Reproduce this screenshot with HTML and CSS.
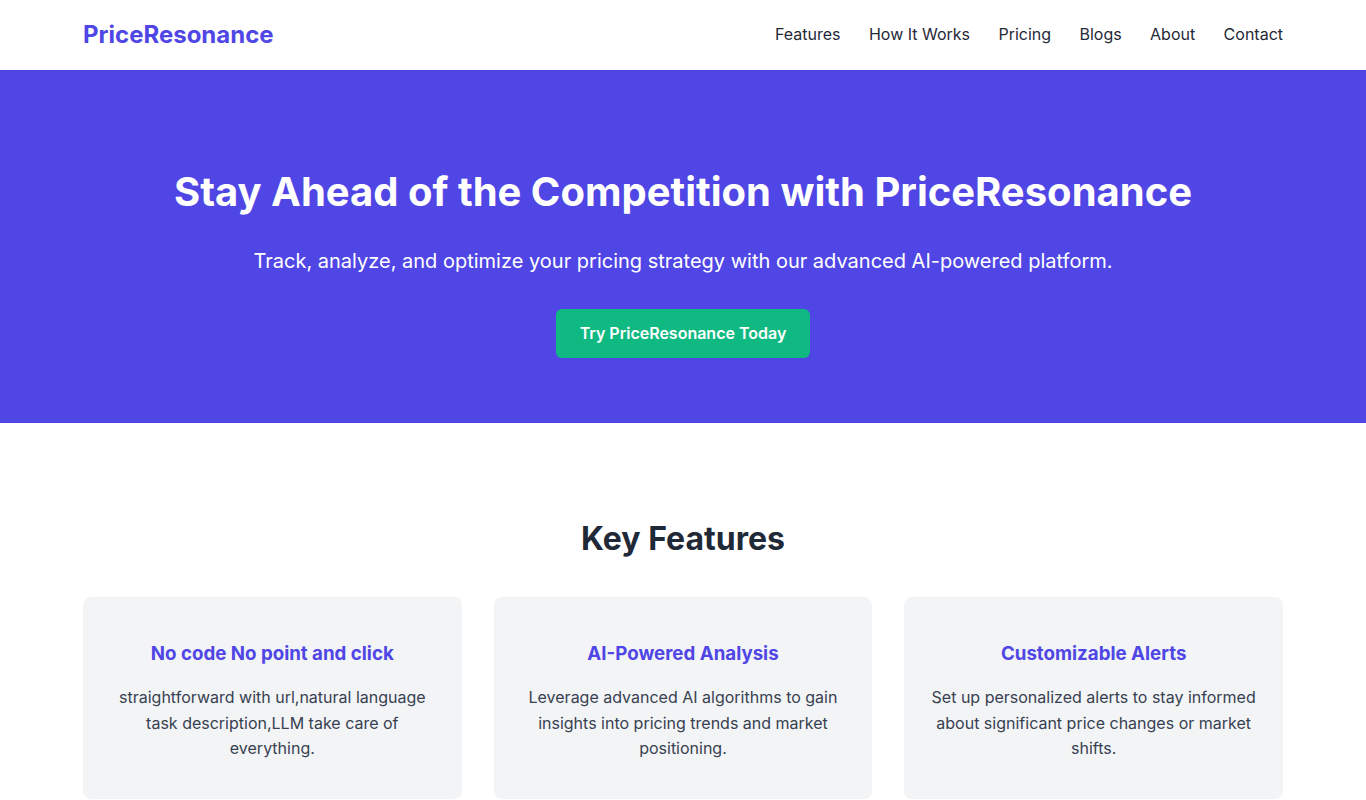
FILE: index.html
```html
<!DOCTYPE html>
<html lang="en">
<head>
  <meta charset="UTF-8" />
  <meta name="viewport" content="width=device-width, initial-scale=1" />
  <title>PriceResonance</title>
  <link rel="stylesheet" href="styles.css">
</head>
<body>

<header class="site-header">
  <div class="container header-inner">
    <a href="#" class="logo">PriceResonance</a>
    <nav class="main-nav">
      <a href="#features">Features</a>
      <a href="#how">How It Works</a>
      <a href="#pricing">Pricing</a>
      <a href="#blogs">Blogs</a>
      <a href="#about">About</a>
      <a href="#contact">Contact</a>
    </nav>
  </div>
</header>

<main>
  <!-- Hero -->
  <section class="hero">
    <div class="container">
      <h1>Stay Ahead of the Competition with PriceResonance</h1>
      <p class="hero-sub">Track, analyze, and optimize your pricing strategy with our advanced AI-powered platform.</p>
      <a href="#" class="btn-cta">Try PriceResonance Today</a>
    </div>
  </section>

  <!-- Features -->
  <section id="features" class="features">
    <div class="container">
      <h2>Key Features</h2>
      <div class="feature-grid">
        <div class="feature-card">
          <h3>No code No point and click</h3>
          <p>straightforward with url,natural language task description,LLM take care of everything.</p>
        </div>
        <div class="feature-card">
          <h3>AI-Powered Analysis</h3>
          <p>Leverage advanced AI algorithms to gain insights into pricing trends and market positioning.</p>
        </div>
        <div class="feature-card">
          <h3>Customizable Alerts</h3>
          <p>Set up personalized alerts to stay informed about significant price changes or market shifts.</p>
        </div>
      </div>
    </div>
  </section>
</main>

</body>
</html>
```

FILE: styles.css
```css
body {
  font-family: Inter, 'Noto Sans', sans-serif;
  margin: 0;
  background-color: #fff;
  color: #1f2937;
}

a {
  text-decoration: none;
  color: inherit;
}

.container {
  max-width: 1200px;
  margin: 0 auto;
}

.site-header {
  background: #fff;
}

.header-inner {
  height: 68px;
  padding-bottom: 2px;
  display: flex;
  justify-content: space-between;
  align-items: center;
}

.logo {
  font-size: 24px;
  font-weight: 700;
  color: #4f46e5;
}

.main-nav {
  display: flex;
  gap: 28.4px;
}

.main-nav a {
  font-size: 16px;
  color: #1f2937;
}

.hero {
  background-color: #4f46e5;
  color: #fff;
  text-align: center;
  padding: 98px 0 65px;
}

.hero h1 {
  margin: 0 0 31px;
  font-size: 40px;
  line-height: 48px;
  font-weight: 700;
}

.hero-sub {
  margin: 0 0 34px;
  font-size: 20px;
  line-height: 28px;
}

.btn-cta {
  display: inline-block;
  background-color: #10b981;
  color: #fff;
  font-weight: 600;
  font-size: 16px;
  line-height: 24px;
  padding: 12px 24px 13px;
  border-radius: 6px;
}

.features {
  padding: 96px 0 0;
}

.features h2 {
  margin: 0 0 38px;
  text-align: center;
  font-size: 32px;
  line-height: 40px;
  font-weight: 700;
}

.feature-grid {
  display: grid;
  grid-template-columns: repeat(3, 1fr);
  gap: 32px;
}

.feature-card {
  background-color: #f3f4f6;
  border-radius: 8px;
  padding: 43px 24px 37px;
  text-align: center;
}

.feature-card h3 {
  margin: 0 0 17px;
  font-size: 18.7px;
  line-height: 28px;
  font-weight: 700;
  color: #4f46e5;
}

.feature-card p {
  margin: 0;
  font-size: 16px;
  line-height: 25.6px;
  color: #374151;
}
```
